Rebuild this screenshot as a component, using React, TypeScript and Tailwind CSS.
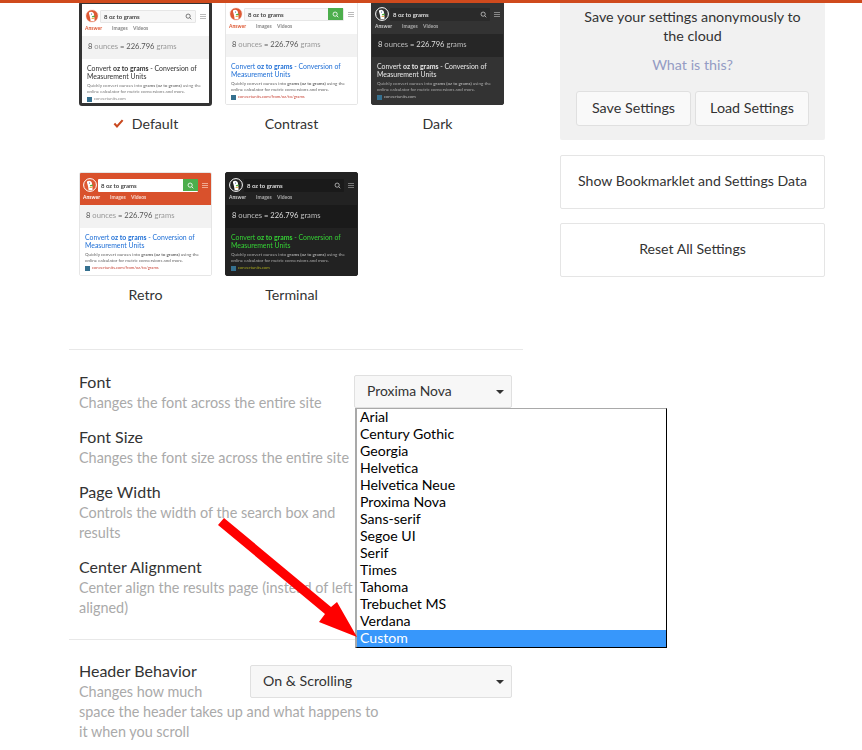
type Theme = {
  header: string;
  answer: string;
  body: string;
  tabs: string;
  query: string;
  search: string;
  answerText: string;
  answerMuted: string;
  title: string;
  snippet: string;
  url: string;
  frame: string;
  searchBtn?: boolean;
  activeTab: string;
  href: string;
  duck: string;
  burger: string;
};

function Duck({ bg }: { bg: string }) {
  return (
    <svg viewBox="0 0 14 14" className="w-[14px] h-[14px] shrink-0">
      <circle cx="7" cy="7" r="6.4" fill={bg} stroke="#ffffff" strokeWidth="1" />
      <path d="M4 3.600c1.600-1.600 4.800-.9 5 1.800.1 1.600.5 3.500.6 6.300-1.500.9-3 .8-4 .2-.3-2.200-.6-3.800-1-5.200-.3-1.200-.8-2.300-.6-3.100z" fill="#ffffff" />
      <path d="M6.800 7.300l2.800-.8.3 1.400-2.800.3z" fill="#4caf3c" />
      <path d="M6.600 9l2.600-.3.100 1-2.600.2z" fill="#e8a33a" />
      <circle cx="6.500" cy="5" r="0.6" fill="#2d4f8e" />
    </svg>
  );
}

function Thumb({ t, selected }: { t: Theme; selected?: boolean }) {
  return (
    <div
      className={`overflow-hidden flex flex-col shrink-0 blur-[0.25px] ${t.frame} ${
        selected ? "box-border w-[133px] h-[105px] border-[3px] border-[#333333] rounded-[3px]" : "box-border w-[133px] h-[104px] border border-[#e6e6e6] rounded-[2px]"
      }`}
    >
      <div className={`${t.header} h-[32px] shrink-0 flex flex-col px-[3px] pt-[5px]`}>
        <div className="flex items-center">
          <Duck bg={t.duck} />
          <div className={`${t.search} w-[100px] h-[13px] ml-[1px] flex items-center justify-between pl-[3px] rounded-[1px] box-border`}>
            <span className={`text-[6px] font-bold ${t.query}`}>8 oz to grams</span>
            {t.searchBtn ? (
              <span className="w-[15px] h-[12px] bg-[#4cae4c] flex items-center justify-center">
                <svg viewBox="0 0 10 10" className="w-[7px] h-[7px]" fill="none" stroke="#ffffff" strokeWidth="1.200">
                  <circle cx="4.500" cy="4.500" r="3" />
                  <path d="M6.800 6.800l2.200 2.200" />
                </svg>
              </span>
            ) : (
              <svg viewBox="0 0 10 10" className={`w-[7px] h-[7px] mr-[3px] ${t.query}`} fill="none" stroke="currentColor" strokeWidth="1">
                <circle cx="4.500" cy="4.500" r="3" />
                <path d="M6.800 6.800l2.200 2.200" />
              </svg>
            )}
          </div>
          <div className="w-[6px] ml-[4px] flex flex-col gap-[1px]">
            <div className={`h-[1px] ${t.burger}`} />
            <div className={`h-[1px] ${t.burger}`} />
            <div className={`h-[1px] ${t.burger}`} />
          </div>
        </div>
        <div className={`flex text-[5px] leading-[6px] font-bold mt-[2px] ${t.tabs}`}>
          <span className={`w-[27px] ${t.activeTab}`}>Answer</span>
          <span className="w-[21px]">Images</span>
          <span>Videos</span>
        </div>
      </div>
      <div className={`${t.answer} h-[23px] shrink-0 flex items-center pl-[6px] pb-[1px] text-[7.600px] whitespace-pre ${t.answerMuted}`}>
        <span className={t.answerText}>8</span>
        {" ounces "}
        <span className={t.answerText}>= 226.796</span>
        {" grams"}
      </div>
      <div className={`${t.body} flex-1 px-[5px] pt-[5px] overflow-hidden`}>
        <div className={`text-[6.900px] leading-[8px] whitespace-nowrap ${t.title}`}>
          Convert <b>oz to grams</b> - Conversion of
          <br />
          Measurement Units
        </div>
        <div className={`text-[4.500px] leading-[6px] mt-[3px] whitespace-nowrap ${t.snippet}`}>
          Quickly convert ounces into <b>grams (oz to grams)</b> using the
          <br />
          online calculator for metric conversions and more.
        </div>
        <div className={`flex items-center gap-[2px] text-[4.200px] leading-[6px] mt-[1px] whitespace-nowrap ${t.url}`}>
          <span className="w-[5px] h-[5px] bg-[#35708f] shrink-0" />
          {t.href}
        </div>
      </div>
    </div>
  );
}

const themes: Record<string, Theme> = {
  Default: {
    header: "bg-white", answer: "bg-[#f2f2f2]", body: "bg-white", tabs: "text-[#888888]", query: "text-[#444444]",
    search: "bg-[#f7f7f7] border border-[#e6e6e6]", answerText: "text-[#555555]", answerMuted: "text-[#999999]",
    title: "text-[#333333]", snippet: "text-[#777777]", url: "text-[#888888]", frame: "bg-white", activeTab: "text-[#de5833]", href: "convertunits.com",
    duck: "#de5833", burger: "bg-[#bbbbbb]",
  },
  Contrast: {
    header: "bg-white", answer: "bg-[#f2f2f2]", body: "bg-white", tabs: "text-[#888888]", query: "text-[#444444]",
    search: "bg-[#f7f7f7] border border-[#e6e6e6]", answerText: "text-[#555555]", answerMuted: "text-[#999999]",
    title: "text-[#1f6fd6]", snippet: "text-[#666666]", url: "text-[#c9473a]", frame: "bg-white", searchBtn: true, activeTab: "text-[#de5833]", href: "convertunits.com/from/oz/to/grams",
    duck: "#de5833", burger: "bg-[#bbbbbb]",
  },
  Dark: {
    header: "bg-[#333333]", answer: "bg-[#262626]", body: "bg-[#333333]", tabs: "text-[#aaaaaa]", query: "text-[#dddddd]",
    search: "bg-[#2a2a2a]", answerText: "text-[#dddddd]", answerMuted: "text-[#bbbbbb]",
    title: "text-[#e8e8e8]", snippet: "text-[#aaaaaa]", url: "text-[#bbbbbb]", frame: "bg-[#333333] !border-[#333333]", activeTab: "text-[#cccccc]", href: "convertunits.com",
    duck: "#333333", burger: "bg-[#888888]",
  },
  Retro: {
    header: "bg-[#d9512c]", answer: "bg-[#f2f2f2]", body: "bg-white", tabs: "text-[#f6d9d0]", query: "text-[#444444]",
    search: "bg-white", answerText: "text-[#555555]", answerMuted: "text-[#999999]",
    title: "text-[#1f6fd6]", snippet: "text-[#666666]", url: "text-[#c9473a]", frame: "bg-white", searchBtn: true, activeTab: "text-white", href: "convertunits.com/from/oz/to/grams",
    duck: "#de5833", burger: "bg-[#f0a890]",
  },
  Terminal: {
    header: "bg-[#222222]", answer: "bg-[#1a1a1a]", body: "bg-[#222222]", tabs: "text-[#aaaaaa]", query: "text-[#dddddd]",
    search: "bg-[#1a1a1a]", answerText: "text-[#dddddd]", answerMuted: "text-[#bbbbbb]",
    title: "text-[#35d135]", snippet: "text-[#aaaaaa]", url: "text-[#a8a81e]", frame: "bg-[#222222] !border-[#222222]", activeTab: "text-[#cccccc]", href: "convertunits.com",
    duck: "#222222", burger: "bg-[#777777]",
  },
};

function ThemeCard({ name, selected }: { name: string; selected?: boolean }) {
  return (
    <div className="w-[133px] flex flex-col">
      <Thumb t={themes[name]} selected={selected} />
      <div className={`${selected ? "mt-[8px]" : "mt-[9px]"} h-[20px] pb-[1px] flex items-center justify-center gap-[8px] text-[14.200px] text-[#333333]`}>
        {selected && (
          <svg viewBox="0 0 14 12" className="w-[11px] h-[9px]" fill="none" stroke="#c9481f" strokeWidth="2.800">
            <path d="M1.500 6l3.500 3.800 7.500-8.300" />
          </svg>
        )}
        {name}
      </div>
    </div>
  );
}

function Setting({ title, desc, cls }: { title: string; desc: React.ReactNode; cls: string }) {
  return (
    <div className={cls}>
      <div className="text-[16px] leading-[20px] text-[#333333]">{title}</div>
      <div className="text-[14.400px] leading-[20px] mt-[1px] text-[#aaaaaa]">{desc}</div>
    </div>
  );
}

function Caret() {
  return <span className="w-0 h-0 mt-[2px] border-x-[4px] border-x-transparent border-t-[4px] border-t-[#333333]" />;
}

const fonts = ["Arial", "Century Gothic", "Georgia", "Helvetica", "Helvetica Neue", "Proxima Nova", "Sans-serif", "Segoe UI", "Serif", "Times", "Tahoma", "Trebuchet MS", "Verdana"];

export default function App() {
  return (
    <div className="relative h-[750px] w-[862px] overflow-hidden bg-white font-['Lato',sans-serif]">
      <div className="relative z-10 h-[3px] bg-[#cf4a1d]" />
      <div className="flex -mt-[2px]">
        <div className="ml-[69px] w-[454px] flex flex-col">
          <div className="pl-[10px] flex flex-col gap-[38px] h-[348px] border-b border-[#e8e8e8] box-content">
            <div className="flex gap-[13px]">
              <ThemeCard name="Default" selected />
              <ThemeCard name="Contrast" />
              <ThemeCard name="Dark" />
            </div>
            <div className="flex gap-[13px]">
              <ThemeCard name="Retro" />
              <ThemeCard name="Terminal" />
            </div>
          </div>
          <div className="pl-[10px] pt-[22px] h-[267px] border-b border-[#e8e8e8] box-content">
            <div className="flex justify-between w-[433px] h-[55px]">
              <Setting cls="w-[275px] whitespace-nowrap" title="Font" desc="Changes the font across the entire site" />
              <div className="mt-[3px] w-[158px] h-[33px] pb-[1px] bg-[#f7f7f7] border border-[#e0e0e0] rounded-[2px] flex items-center justify-between pl-[12px] pr-[7px] text-[13.900px] text-[#333333]">
                Proxima Nova
                <Caret />
              </div>
            </div>
            <Setting cls="h-[55px] w-[275px] whitespace-nowrap" title="Font Size" desc="Changes the font size across the entire site" />
            <Setting cls="h-[75px] w-[260px]" title="Page Width" desc="Controls the width of the search box and results" />
            <Setting cls="w-[275px]" title="Center Alignment" desc="Center align the results page (instead of left aligned)" />
          </div>
          <div className="pl-[10px] pt-[21px] w-[443px]">
            <div className="float-right mt-[4px] w-[262px] h-[33px] pb-[2px] bg-[#f7f7f7] border border-[#e0e0e0] rounded-[2px] flex items-center justify-between pl-[12px] pr-[7px] text-[14.200px] text-[#333333]">
              On &amp; Scrolling
              <Caret />
            </div>
            <div className="text-[16px] leading-[20px] text-[#333333]">Header Behavior</div>
            <div className="text-[14.400px] leading-[20px] mt-[1px] text-[#aaaaaa]">
              Changes how much
              <br />
              space the header takes up and what happens to
              <br />
              it when you scroll
            </div>
          </div>
        </div>
        <div className="ml-[37px] w-[265px] flex flex-col">
          <div className="h-[139px] bg-[#f1f1f1] rounded-b-[2px] flex flex-col items-center text-[14.300px] text-[#333333]">
            <div className="mt-[6px] w-[230px] text-center leading-[19px]">Save your settings anonymously to the cloud</div>
            <div className="mt-[10px] leading-[19px] text-[#949cc4]">What is this?</div>
            <div className="mt-[17px] flex gap-[4px]">
              <div className="w-[115px] h-[35px] pb-[2px] bg-[#f9f9f9] border border-[#e0e0e0] rounded-[3px] flex items-center justify-center">Save Settings</div>
              <div className="w-[114px] h-[35px] pb-[2px] bg-[#f9f9f9] border border-[#e0e0e0] rounded-[3px] flex items-center justify-center">Load Settings</div>
            </div>
          </div>
          <div className="mt-[15px] h-[54px] pb-[2px] border border-[#e5e5e5] rounded-[2px] flex items-center justify-center text-[14.100px] text-[#333333]">
            Show Bookmarklet and Settings Data
          </div>
          <div className="mt-[14px] h-[54px] pb-[2px] border border-[#e5e5e5] rounded-[2px] flex items-center justify-center text-[14.100px] text-[#333333]">
            Reset All Settings
          </div>
        </div>
      </div>

      <div className="absolute left-[355px] top-[408px] w-[312px] h-[240px] bg-white border-l-[2px] border-t-[1px] border-l-[#a9a9a9] border-t-[#a9a9a9] border-r border-b border-r-black border-b-black text-[14.100px] leading-[15px] text-black">
        {fonts.map((f) => (
          <div key={f} className="h-[17px] pl-[3px]">{f}</div>
        ))}
        <div className="h-[17px] pl-[3px] bg-[#3797fb] text-white">Custom</div>
      </div>

      <svg className="absolute left-0 top-0 pointer-events-none" width="862" height="750" viewBox="0 0 862 750">
        <polygon points="224,518 218,525 325,614 319,622 357,637 337,602 331,607" fill="#ff0000" />
      </svg>
    </div>
  );
}
